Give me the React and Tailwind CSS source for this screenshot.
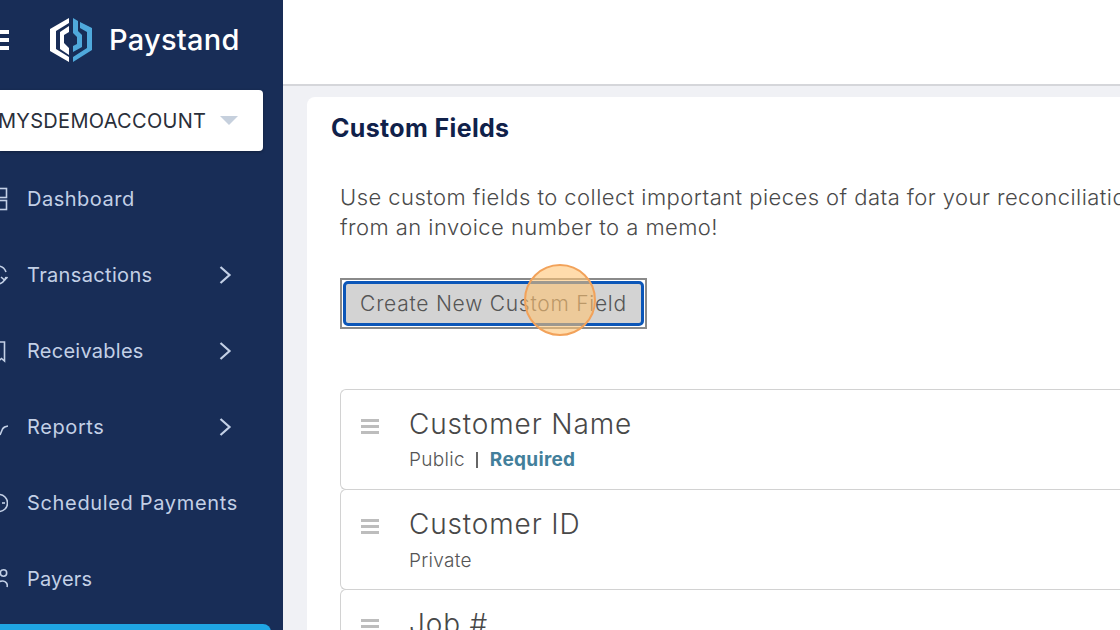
import React from "react";

const font = { fontFamily: '"Inter", "Liberation Sans", sans-serif' };

const Chevron = () => (
  <svg width="14" height="22" viewBox="0 0 14 22" fill="none" stroke="#c3d0e6" strokeWidth="2.2" className="shrink-0">
    <path d="M2.5 3 L11.5 11 L2.5 19" />
  </svg>
);

const icons = {
  dash: (
    <g>
      <rect x="-8" y="1.5" width="14.5" height="9" />
      <rect x="-8" y="13.5" width="14.5" height="9" />
    </g>
  ),
  trans: (
    <g>
      <path d="M-3 3a9 9 0 0 1 9 6" />
      <path d="M6 14a9 9 0 0 1-9 7" />
      <path d="M1 14l3.5 3 3-3" />
    </g>
  ),
  recv: <path d="M-8 3h12.5v19l-3-2.5-3 2.5" />,
  rep: <path d="M0 20L2.5 14Q4 11.5 8 11" />,
  sched: (
    <g>
      <circle cx="-1" cy="12" r="8.5" />
      <path d="M2 12h3" />
    </g>
  ),
  payers: (
    <g>
      <circle cx="3.5" cy="6" r="3.2" />
      <path d="M-3 20v-2a6 6 0 0 1 6-4a4.5 4.5 0 0 1 4 6" />
    </g>
  ),
};

const Item = ({ icon, label, chevron, tr }) => (
  <div className="h-[76px] flex items-center">
    <svg width="8" height="24" viewBox="0 0 8 24" fill="none" stroke="#c3d0e6" strokeWidth="1.6" className="shrink-0 overflow-hidden">
      {icons[icon]}
    </svg>
    <span className={`ml-[19px] text-[20px] text-[#c3d0e6] ${tr}`}>{label}</span>
    {chevron && (
      <span className="ml-auto mr-[51px] flex">
        <Chevron />
      </span>
    )}
  </div>
);

const Field = ({ title, sub, children }) => (
  <div className="h-[101px] -mb-px border border-[#d2d2d2] border-r-0 rounded-l-[6px] flex pl-[20px] pt-[19px]">
    <div className="w-[18px] pt-[10px] flex flex-col gap-[3px] shrink-0">
      <div className="h-[3px] bg-[#bdbdbd]" />
      <div className="h-[3px] bg-[#bdbdbd]" />
      <div className="h-[3px] bg-[#bdbdbd]" />
    </div>
    <div className="ml-[30px]">
      <div className="text-[28px] leading-[30px] text-[#484848] font-light tracking-[0.85px]">{title}</div>
      <div className={`${sub} text-[19px] leading-[24px] text-[#555] font-light tracking-[0.3px] whitespace-nowrap flex items-center`}>{children}</div>
    </div>
  </div>
);

export default function App() {
  return (
    <div style={font} className="w-[1120px] h-[630px] overflow-hidden flex bg-[#f0f1f5]">
      <aside className="w-[283px] shrink-0 bg-[#182d57] flex flex-col overflow-hidden">
        <div className="h-[90px] shrink-0 flex items-center pb-[10px]">
          <div className="w-[9px] flex flex-col gap-[4px]">
            <div className="h-[4px] bg-white" />
            <div className="h-[4px] bg-white" />
            <div className="h-[4px] bg-white" />
          </div>
          <svg width="43" height="45" viewBox="0 0 43 45" className="ml-[41px] shrink-0">
            <path d="M19 0V5L6 13V31L19 39V44L0 33V11Z" fill="#fff" />
            <path d="M19 8V14L14 17V25L19 30V37L10 31V14Z" fill="#fff" />
            <path d="M23 0L28 3V13L32 17V29L23 34V28L27 26V19L23 15Z" fill="#4fa9dc" />
            <path d="M30 4L42 10V32L23 44V39L37 30V14L30 10Z" fill="#4fa9dc" />
          </svg>
          <span className="ml-[16px] text-[29px] font-medium text-white tracking-[0.25px]">Paystand</span>
        </div>
        <div className="w-[263px] h-[61px] shrink-0 bg-white rounded-r-[4px] flex items-center shadow-[0_1px_3px_rgba(0,0,0,0.3)]">
          <span className="-ml-[2px] text-[20px] text-[#2a2f3a] tracking-[0.3px]">MYSDEMOACCOUNT</span>
          <div className="ml-auto mr-[25px] w-0 h-0 border-x-[9px] border-x-transparent border-t-[9px] border-t-[#c6d0dd]" />
        </div>
        <nav className="mt-[10px] flex flex-col">
          <Item icon="dash" label="Dashboard" tr="tracking-[0.5px]" />
          <Item icon="trans" label="Transactions" chevron tr="-ml-[1px] tracking-[0.35px]" />
          <Item icon="recv" label="Receivables" chevron tr="tracking-[0.25px]" />
          <Item icon="rep" label="Reports" chevron tr="tracking-[0.6px]" />
          <Item icon="sched" label="Scheduled Payments" tr="tracking-[0.66px]" />
          <Item icon="payers" label="Payers" tr="tracking-[0.15px]" />
        </nav>
        <div className="mt-[7px] w-[271px] h-[20px] shrink-0 bg-[#1fa5e3] rounded-tr-[8px]" />
      </aside>
      <main className="flex-1 min-w-0 flex flex-col">
        <div className="h-[86px] shrink-0 bg-white border-b-2 border-[#d5d6da]" />
        <div className="ml-[24px] mt-[11px] flex-1 bg-white rounded-tl-[8px] pl-[24px] pt-[15px]">
          <h1 className="text-[25px] leading-[32px] font-bold text-[#10214a] tracking-[0.35px]">Custom Fields</h1>
          <div className="pl-[9px] mt-[38px]">
            <p className="text-[22px] leading-[30px] text-[#4a4a4a] font-light whitespace-nowrap tracking-[0.45px]">
              Use custom fields to collect important pieces of data for your reconciliation,
              <br />
              from an invoice number to a memo!
            </p>
            <div className="relative mt-[36px] w-[307px] h-[51px] border-2 border-[#8a8a8a] p-[1px]">
              <button className="w-full h-full bg-[#d3d3d3] border-[3px] border-[#0b56b8] rounded-[5px] text-[21px] text-[#555] font-light tracking-[0.75px] whitespace-nowrap">
                Create New Custom Field
              </button>
              <div className="absolute left-[182px] top-[-16px] w-[72px] h-[72px] rounded-full bg-[#ffc474]/60 border-2 border-[#f2a25a]" />
            </div>
            <div className="mt-[60px]">
              <Field title="Customer Name" sub="mt-[9px]">
                Public
                <span className="ml-[11px] mr-[12px] inline-block w-[2px] h-[16px] bg-[#666]" />
                <span className="font-bold text-[#437f9b]">Required</span>
              </Field>
              <Field title="Customer ID" sub="mt-[10px]">Private</Field>
              <Field title="Job #" sub="mt-[9px]" />
            </div>
          </div>
        </div>
      </main>
    </div>
  );
}
